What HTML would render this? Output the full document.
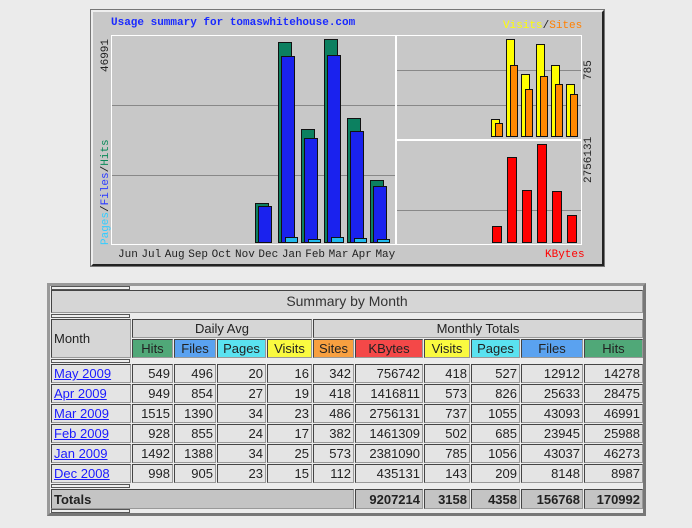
<!DOCTYPE html>
<html><head><meta charset="utf-8"><style>
body{margin:0;width:692px;height:528px;background:#ebebeb;position:relative;overflow:hidden;font-family:"Liberation Sans",sans-serif}
.a{position:absolute;box-sizing:border-box}
.b{position:absolute;box-sizing:border-box;border:1px solid #111}
.g{position:absolute;height:1px;background:#888}
.m{position:absolute;font-family:"Liberation Mono",monospace;font-size:11px;white-space:nowrap}
.c{position:absolute;box-sizing:border-box;border:1px solid #444;border-right-color:#999;border-bottom-color:#999;font-size:13px;color:#222;padding:0 2px;line-height:18px;text-align:right;background:#e4e4e4}
.h{text-align:center;font-weight:normal}
.sp{position:absolute;box-sizing:border-box;border:1px solid #555;height:4px;width:79px;left:51px;background:#eee}
</style></head><body>
<!-- chart -->
<div class="a" style="left:91px;top:10px;width:513px;height:256px;background:#c8c8c8;border:2px solid #222;border-top-color:#eee;border-left-color:#eee;outline:1px solid #777"></div>
<div class="m" style="left:111px;top:17px;color:#1a2aff;font-weight:bold">Usage summary for tomaswhitehouse.com</div>
<div class="m" style="left:503px;top:20px;color:#ffff00">Visits<span style="color:#222">/</span><span style="color:#ff8000">Sites</span></div>
<div class="a" style="left:111px;top:35px;width:285px;height:210px;border:1px solid #fff;border-right:1px solid #fff"></div>
<div class="a" style="left:396px;top:35px;width:186px;height:105px;border:1px solid #fff"></div>
<div class="a" style="left:396px;top:140px;width:186px;height:105px;border:1px solid #fff"></div>
<div class="g" style="left:112px;top:105px;width:283px"></div>
<div class="g" style="left:112px;top:175px;width:283px"></div>
<div class="g" style="left:397px;top:70px;width:184px"></div>
<div class="g" style="left:397px;top:105px;width:184px"></div>
<div class="g" style="left:397px;top:210px;width:184px"></div>
<div class="m" style="left:93px;top:72px;transform:rotate(-90deg);transform-origin:left top;top:72px;left:100px;color:#222;font-size:11px">46991</div>
<div class="m" style="left:100px;top:245px;transform:rotate(-90deg);transform-origin:left top;color:#222"><span style="color:#33ccff">Pages</span>/<span style="color:#2a3aff">Files</span>/<span style="color:#0c8a5a">Hits</span></div>
<div class="m" style="left:583px;top:80px;transform:rotate(-90deg);transform-origin:left top;color:#222">785</div>
<div class="m" style="left:583px;top:183px;transform:rotate(-90deg);transform-origin:left top;color:#222">2756131</div>
<div class="m" style="left:118px;top:249px;color:#222;word-spacing:-3px">Jun Jul Aug Sep Oct Nov Dec Jan Feb Mar Apr May</div>
<div class="m" style="left:545px;top:249px;color:#ff0000">KBytes</div>
<!-- hits -->
<div class="b" style="left:255px;top:203px;width:14px;height:40px;background:#0c8060"></div>
<div class="b" style="left:278px;top:42px;width:14px;height:201px;background:#0c8060"></div>
<div class="b" style="left:301px;top:129px;width:14px;height:114px;background:#0c8060"></div>
<div class="b" style="left:324px;top:39px;width:14px;height:204px;background:#0c8060"></div>
<div class="b" style="left:347px;top:118px;width:14px;height:125px;background:#0c8060"></div>
<div class="b" style="left:370px;top:180px;width:14px;height:63px;background:#0c8060"></div>
<!-- files -->
<div class="b" style="left:258px;top:206px;width:14px;height:37px;background:#1a22ee"></div>
<div class="b" style="left:281px;top:56px;width:14px;height:187px;background:#1a22ee"></div>
<div class="b" style="left:304px;top:138px;width:14px;height:105px;background:#1a22ee"></div>
<div class="b" style="left:327px;top:55px;width:14px;height:188px;background:#1a22ee"></div>
<div class="b" style="left:350px;top:131px;width:14px;height:112px;background:#1a22ee"></div>
<div class="b" style="left:373px;top:186px;width:14px;height:57px;background:#1a22ee"></div>
<!-- pages -->
<div class="b" style="left:285px;top:237px;width:13px;height:6px;background:#22bbee"></div>
<div class="b" style="left:308px;top:239px;width:13px;height:4px;background:#22bbee"></div>
<div class="b" style="left:331px;top:237px;width:13px;height:6px;background:#22bbee"></div>
<div class="b" style="left:354px;top:238px;width:13px;height:5px;background:#22bbee"></div>
<div class="b" style="left:377px;top:239px;width:13px;height:4px;background:#22bbee"></div>
<!-- visits/sites -->
<div class="b" style="left:491px;top:119px;width:9px;height:18px;background:#ffff00"></div>
<div class="b" style="left:495px;top:123px;width:8px;height:14px;background:#ff8800"></div>
<div class="b" style="left:506px;top:39px;width:9px;height:98px;background:#ffff00"></div>
<div class="b" style="left:510px;top:65px;width:8px;height:72px;background:#ff8800"></div>
<div class="b" style="left:521px;top:74px;width:9px;height:63px;background:#ffff00"></div>
<div class="b" style="left:525px;top:89px;width:8px;height:48px;background:#ff8800"></div>
<div class="b" style="left:536px;top:44px;width:9px;height:93px;background:#ffff00"></div>
<div class="b" style="left:540px;top:76px;width:8px;height:61px;background:#ff8800"></div>
<div class="b" style="left:551px;top:65px;width:9px;height:72px;background:#ffff00"></div>
<div class="b" style="left:555px;top:84px;width:8px;height:53px;background:#ff8800"></div>
<div class="b" style="left:566px;top:84px;width:9px;height:53px;background:#ffff00"></div>
<div class="b" style="left:570px;top:94px;width:8px;height:43px;background:#ff8800"></div>
<!-- kbytes -->
<div class="b" style="left:492px;top:226px;width:10px;height:17px;background:#ff0000"></div>
<div class="b" style="left:507px;top:157px;width:10px;height:86px;background:#ff0000"></div>
<div class="b" style="left:522px;top:190px;width:10px;height:53px;background:#ff0000"></div>
<div class="b" style="left:537px;top:144px;width:10px;height:99px;background:#ff0000"></div>
<div class="b" style="left:552px;top:191px;width:10px;height:52px;background:#ff0000"></div>
<div class="b" style="left:567px;top:215px;width:10px;height:28px;background:#ff0000"></div>

<!-- table -->
<div class="a" style="left:47px;top:283px;width:599px;height:233px;border:3px solid #777;border-top-color:#999;border-left-color:#999;background:#ececec"></div>
<div class="sp" style="top:286px"></div>
<div class="c h" style="left:51px;top:290px;width:592px;height:23px;line-height:21px;font-size:14px;background:#d6d6d6;color:#333">Summary by Month</div>
<div class="sp" style="top:314px"></div>
<div class="c" style="left:51px;top:319px;width:80px;height:39px;line-height:37px;text-align:left;background:#d6d6d6">Month</div>
<div class="c h" style="left:132px;top:319px;width:180px;height:19px;background:#d6d6d6">Daily Avg</div>
<div class="c h" style="left:313px;top:319px;width:330px;height:19px;background:#d6d6d6">Monthly Totals</div>
<div class="c h" style="left:132px;top:339px;width:41px;height:19px;background:#50a878">Hits</div>
<div class="c h" style="left:174px;top:339px;width:42px;height:19px;background:#5aa2f0">Files</div>
<div class="c h" style="left:217px;top:339px;width:49px;height:19px;background:#5ae2f0">Pages</div>
<div class="c h" style="left:267px;top:339px;width:45px;height:19px;background:#fafa40">Visits</div>
<div class="c h" style="left:313px;top:339px;width:41px;height:19px;background:#f8a040">Sites</div>
<div class="c h" style="left:355px;top:339px;width:68px;height:19px;background:#f44848">KBytes</div>
<div class="c h" style="left:424px;top:339px;width:46px;height:19px;background:#fafa40">Visits</div>
<div class="c h" style="left:471px;top:339px;width:49px;height:19px;background:#5ae2f0">Pages</div>
<div class="c h" style="left:521px;top:339px;width:62px;height:19px;background:#5aa2f0">Files</div>
<div class="c h" style="left:584px;top:339px;width:59px;height:19px;background:#50a878">Hits</div>
<div class="sp" style="top:359px"></div>
<div id="rows"></div>
<script>
var cols=[[51,80],[132,41],[174,42],[217,49],[267,45],[313,41],[355,68],[424,46],[471,49],[521,62],[584,59]];
var d=[["May 2009",549,496,20,16,342,756742,418,527,12912,14278],["Apr 2009",949,854,27,19,418,1416811,573,826,25633,28475],["Mar 2009",1515,1390,34,23,486,2756131,737,1055,43093,46991],["Feb 2009",928,855,24,17,382,1461309,502,685,23945,25988],["Jan 2009",1492,1388,34,25,573,2381090,785,1056,43037,46273],["Dec 2008",998,905,23,15,112,435131,143,209,8148,8987]];
var h="";
d.forEach(function(r,i){var y=364+i*20;r.forEach(function(v,j){var c=cols[j];
if(j==0)h+='<div class="c" style="left:'+c[0]+'px;top:'+y+'px;width:'+c[1]+'px;height:19px;text-align:left"><span style="color:#1a1aff;text-decoration:underline">'+v+'</span></div>';
else h+='<div class="c" style="left:'+c[0]+'px;top:'+y+'px;width:'+c[1]+'px;height:19px">'+v+'</div>';});});
h+='<div class="sp" style="top:484px"></div>';
h+='<div class="c" style="left:51px;top:489px;width:303px;height:20px;text-align:left;font-weight:bold;background:#c4c4c4;line-height:19px">Totals</div>';
var t=[9207214,3158,4358,156768,170992];
t.forEach(function(v,k){var c=cols[6+k];h+='<div class="c" style="left:'+c[0]+'px;top:489px;width:'+c[1]+'px;height:20px;font-weight:bold;background:#c4c4c4;line-height:19px">'+v+'</div>';});
h+='<div class="sp" style="top:509px"></div>';
document.getElementById("rows").outerHTML=h;
</script>
</body></html>
